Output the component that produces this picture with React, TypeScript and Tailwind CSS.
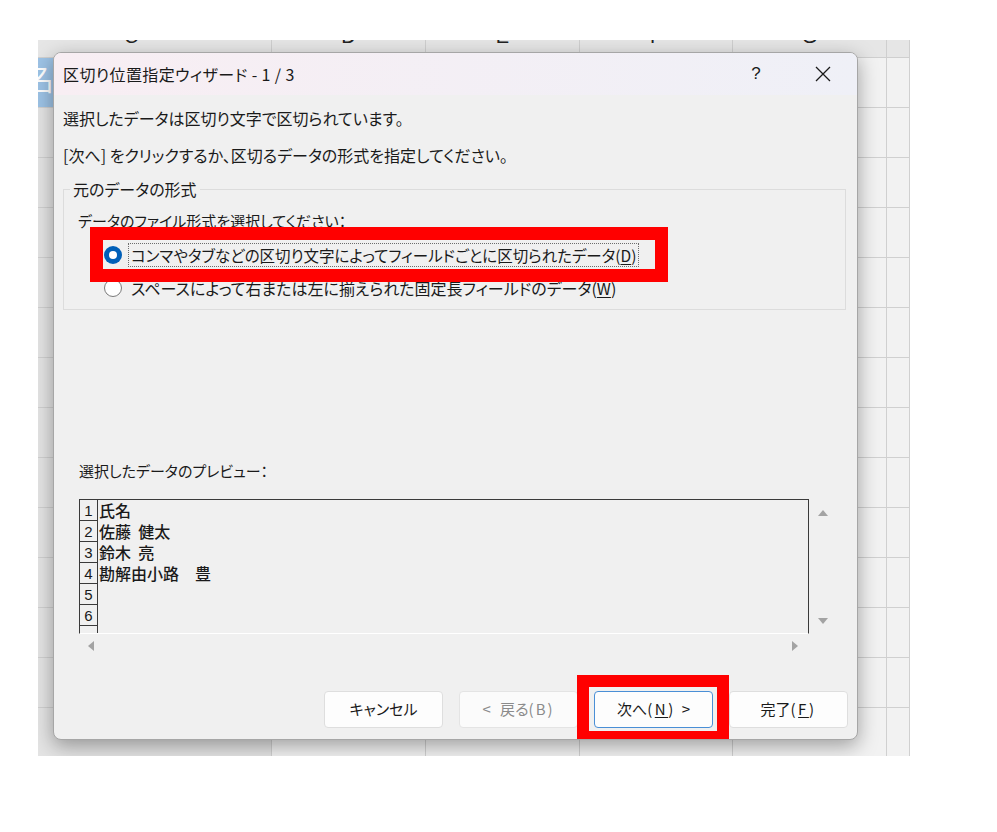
import React from 'react';

const jp = "font-['Yu_Gothic_UI','Noto_Sans_CJK_JP',sans-serif] [font-feature-settings:'palt']";

const headers = [
  { letter: 'C', cls: 'justify-start pl-[86px]' },
  { letter: 'D', cls: 'justify-center' },
  { letter: 'E', cls: 'justify-center' },
  { letter: 'F', cls: 'justify-center' },
  { letter: 'G', cls: 'justify-center' },
  { letter: '', cls: 'justify-center' },
];

const previewRows = ['氏名', '佐藤  健太', '鈴木  亮', '勘解由小路　豊', '', '', ''];

function SheetGrid() {
  const rows = Array.from({ length: 14 });
  return (
    <div className="grid grid-cols-[234px_154px_154px_153px_154px_23px]">
      {headers.map((h, i) => (
        <div
          key={i}
          className={`flex h-[18px] overflow-hidden border-r border-b border-[#cfcfcf] bg-[#e6e6e6] ${h.cls}`}
        >
          <span className="-mt-[14px] font-['Liberation_Sans',sans-serif] text-[20px] leading-none text-[#222]">
            {h.letter}
          </span>
        </div>
      ))}
      {rows.map((_, r) =>
        headers.map((_, c) => (
          <div
            key={`${r}-${c}`}
            className={`h-[50px] overflow-hidden border-r border-b border-[#d0d0d0] ${
              r === 0 && c === 0 ? 'bg-[#9dc3e6]' : c === 0 ? 'bg-[#e4e4e4]' : ''
            }`}
          >
            {r === 0 && c === 0 && (
              <span className={`${jp} -ml-[14px] block pt-[4px] text-[30px] leading-none text-white`}>名</span>
            )}
          </div>
        )),
      )}
    </div>
  );
}

function Radio({ checked }: { checked?: boolean }) {
  if (checked) {
    return (
      <span className="flex h-[18px] w-[18px] shrink-0 items-center justify-center rounded-full bg-[#005fb8]">
        <span className="h-[8px] w-[8px] rounded-full bg-white" />
      </span>
    );
  }
  return <span className="h-[18px] w-[18px] shrink-0 rounded-full border border-[#7a7a7a] bg-white" />;
}

function Arrow({ dir }: { dir: 'up' | 'down' | 'left' | 'right' }) {
  const pts = {
    up: '0,7 5,1 10,7',
    down: '0,1 5,7 10,1',
    left: '7,0 1,5 7,10',
    right: '1,0 7,5 1,10',
  }[dir];
  const vertical = dir === 'up' || dir === 'down';
  return (
    <svg width={vertical ? 10 : 8} height={vertical ? 8 : 10} viewBox={vertical ? '0 0 10 8' : '0 0 8 10'}>
      <polygon points={pts} fill="#a3a3a3" />
    </svg>
  );
}

function WizardDialog() {
  return (
    <div
      className={`${jp} absolute left-[15px] top-[12px] h-[688px] w-[805px] overflow-hidden rounded-[8px] border border-[#a6a6a6] bg-[#f0f0f0] text-[16px] text-[#1a1a1a] shadow-[0_6px_20px_rgba(0,0,0,0.35)]`}
    >
      {/* title bar */}
      <div className="flex h-[42px] items-center bg-linear-to-r from-[#f8eef3] to-[#eff0f7] pl-[9px]">
        <span className="tracking-[0.4px]">区切り位置指定ウィザード - 1 / 3</span>
        <div className="ml-auto flex items-center gap-[21px] pr-[11px]">
          <span className="flex w-[46px] justify-center font-['Liberation_Sans',sans-serif] text-[17px]">?</span>
          <span className="flex w-[46px] justify-center">
            <svg width="16" height="16" viewBox="0 0 16 16">
              <path d="M1 1L15 15M15 1L1 15" stroke="#1a1a1a" strokeWidth="1.3" />
            </svg>
          </span>
        </div>
      </div>

      <div className="px-[9px]">
        <p className="mt-[12px] leading-[22px]">選択したデータは区切り文字で区切られています。</p>
        <p className="mt-[15px] leading-[22px]">[次へ] をクリックするか、区切るデータの形式を指定してください。</p>

        <fieldset className="mt-[12px] h-[132px] w-[783px] border border-[#dcdcdc]">
          <legend className="ml-[6px] px-[3px] leading-[22px]">元のデータの形式</legend>
          <div className="pl-[14px]">
            <p className="mt-[10px] text-[15px] leading-[22px]">データのファイル形式を選択してください：</p>
            <div className="mt-[11px] ml-[26px] flex h-[24px] items-center gap-[6px]">
              <Radio checked />
              <span className="border border-dotted border-[#6d6d6d] px-[2px] text-[15.5px] leading-[22px]">
                コンマやタブなどの区切り文字によってフィールドごとに区切られたデータ(<span className="underline underline-offset-2">D</span>)
              </span>
            </div>
            <div className="mt-[9px] ml-[26px] flex h-[24px] items-center gap-[6px]">
              <Radio />
              <span className="px-[3px] leading-[22px]">
                スペースによって右または左に揃えられた固定長フィールドのデータ(<span className="underline underline-offset-2">W</span>)
              </span>
            </div>
          </div>
        </fieldset>

        <p className="mt-[150px] ml-[16px] text-[15px] leading-[22px]">選択したデータのプレビュー：</p>

        <div className="mt-[17px] ml-[16px] flex">
          <div className="h-[135px] w-[730px] overflow-hidden border border-[#3a3a3a] border-b-white">
            {previewRows.map((t, i) => (
              <div key={i} className="flex h-[21px] items-stretch">
                <span className="flex w-[18px] shrink-0 items-end justify-center border-r border-b border-[#3a3a3a] font-['Liberation_Sans',sans-serif] text-[15px] leading-[18px]">
                  {i < 6 ? i + 1 : ''}
                </span>
                <span className="pl-[1px] font-['Noto_Sans_CJK_JP',sans-serif] text-[16px] font-medium leading-[20px] whitespace-pre [font-feature-settings:normal]">
                  {t}
                </span>
              </div>
            ))}
          </div>
          <div className="flex w-[26px] flex-col items-center justify-between pt-[10px] pb-[9px] pl-[2px]">
            <Arrow dir="up" />
            <Arrow dir="down" />
          </div>
        </div>
        <div className="ml-[16px] flex h-[24px] w-[730px] items-center justify-between pl-[8px] pr-[10px]">
          <Arrow dir="left" />
          <Arrow dir="right" />
        </div>

        <div className="mt-[33px] flex justify-end gap-[16px] text-[15px]">
          <button className="h-[37px] w-[119px] rounded-[4px] border border-[#dedede] bg-[#fdfdfd]">キャンセル</button>
          <button className="h-[37px] w-[119px] rounded-[4px] border border-[#e4e4e4] bg-[#fbfbfb] text-[#8b8b8b]">
            <span className="tracking-[3px]">&lt; </span>戻る<span className="tracking-[2px]">(B)</span>
          </button>
          <button className="h-[37px] w-[119px] rounded-[4px] border border-[#4a8fd6] bg-[#fdfdfd]">
            次へ<span className="tracking-[2.5px]">(<span className="underline underline-offset-2">N</span>)</span>
            <span className="ml-[6px]">&gt;</span>
          </button>
          <button className="h-[37px] w-[119px] rounded-[4px] border border-[#dedede] bg-[#fdfdfd]">
            完了<span className="tracking-[2.5px]">(<span className="underline underline-offset-2">F</span>)</span>
          </button>
        </div>
      </div>

      {/* red annotation boxes */}
      <div className="absolute left-[36px] top-[174px] h-[55px] w-[578px] border-[13px] border-[#ff0000]" />
      <div className="absolute left-[523px] top-[622px] h-[68px] w-[152px] border-[12px] border-[#ff0000]" />
    </div>
  );
}

export default function App() {
  return (
    <div className="h-[832px] w-[997px] bg-white pt-[40px] pl-[38px]">
      <div className="relative h-[716px] w-[872px] overflow-hidden bg-[#f2f2f2]">
        <SheetGrid />
        <WizardDialog />
      </div>
    </div>
  );
}
